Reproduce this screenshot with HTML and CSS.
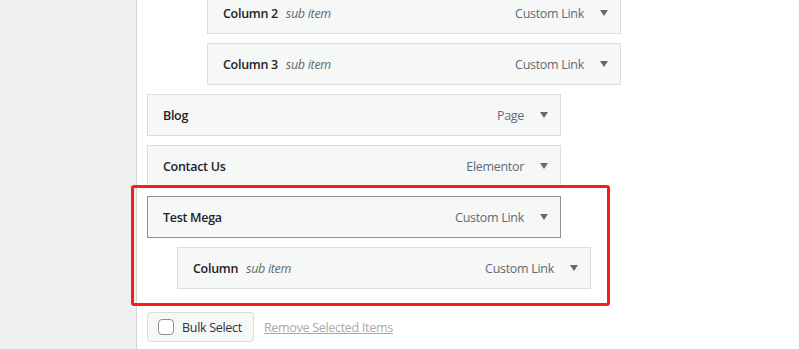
FILE: index.html
```html
<!doctype html>
<html>

<head>
    <title>Menu Structure</title>
    <link rel="stylesheet" href="styles.css">
</head>

<body>
    <aside class="sidebar"></aside>
    <main class="main">
        <ul class="menu">
            <li class="menu-item depth-2">
                <span class="title">Column 2</span><span class="sub">sub item</span>
                <span class="type">Custom Link</span><span class="arrow"></span>
            </li>
            <li class="menu-item depth-2">
                <span class="title">Column 3</span><span class="sub">sub item</span>
                <span class="type">Custom Link</span><span class="arrow"></span>
            </li>
            <li class="menu-item">
                <span class="title">Blog</span>
                <span class="type">Page</span><span class="arrow"></span>
            </li>
            <li class="menu-item">
                <span class="title">Contact Us</span>
                <span class="type">Elementor</span><span class="arrow"></span>
            </li>
            <li class="menu-item active">
                <span class="title">Test Mega</span>
                <span class="type">Custom Link</span><span class="arrow"></span>
            </li>
            <li class="menu-item depth-1">
                <span class="title">Column</span><span class="sub">sub item</span>
                <span class="type">Custom Link</span><span class="arrow"></span>
            </li>
            <div class="highlight"></div>
        </ul>
        <div class="bulk-row">
            <label class="btn">
                <span class="checkbox"></span>
                Bulk Select
            </label>
            <a class="remove">Remove Selected Items</a>
        </div>
    </main>
</body>

</html>
```

FILE: styles.css
```css
body,
html {
    width: 100%;
    height: 100%;
    padding: 0;
    margin: 0;
    background: #fff;
    overflow: hidden;
}

* {
    font-family: "Open Sans", "Noto Sans", sans-serif;
    box-sizing: border-box;
}

body {
    display: flex;
}

.sidebar {
    width: 137px;
    flex: none;
    background: #f0f0f1;
    border-right: 1px solid #d5d5d7;
}

.main {
    padding-left: 10px;
}

.menu {
    list-style: none;
    margin: -8px 0 0;
    padding: 0;
    position: relative;
}

.menu-item {
    width: 414px;
    height: 42px;
    margin-bottom: 9px;
    padding: 0 12px 0 15px;
    display: flex;
    align-items: center;
    background: #f6f7f7;
    border: 1px solid #dcdcde;
    font-size: 12.5px;
    letter-spacing: -0.3px;
}

.menu-item.active {
    border-color: #8c8f94;
}

.depth-1 {
    margin-left: 30px;
}

.depth-2 {
    margin-left: 60px;
}

.title {
    font-weight: 600;
    color: #1d2327;
}

.sub {
    margin-left: 8px;
    font-style: italic;
    color: #646970;
}

.type {
    margin-left: auto;
    color: #646970;
}

.arrow {
    width: 0;
    height: 0;
    margin-left: 16px;
    border-left: 4px solid transparent;
    border-right: 4px solid transparent;
    border-top: 6px solid #646970;
}

.highlight {
    position: absolute;
    left: -16px;
    top: 193px;
    width: 479px;
    height: 121px;
    border: 3px solid #ff1a1a;
    border-radius: 3px;
}

.bulk-row {
    display: flex;
    align-items: center;
    margin-top: 23px;
}

.btn {
    height: 30px;
    padding: 0 11px 0 10px;
    display: flex;
    align-items: center;
    background: #f6f7f7;
    border: 1px solid #dcdcde;
    border-radius: 3px;
    color: #2c3338;
    font-size: 12.5px;
    letter-spacing: -0.3px;
}

.checkbox {
    width: 16px;
    height: 16px;
    margin-right: 8px;
    border: 1px solid #8c8f94;
    border-radius: 4px;
    background: #fff;
}

.remove {
    margin-left: 10px;
    color: #a7aaad;
    font-size: 12.5px;
    letter-spacing: -0.3px;
    text-decoration: underline;
}
```
